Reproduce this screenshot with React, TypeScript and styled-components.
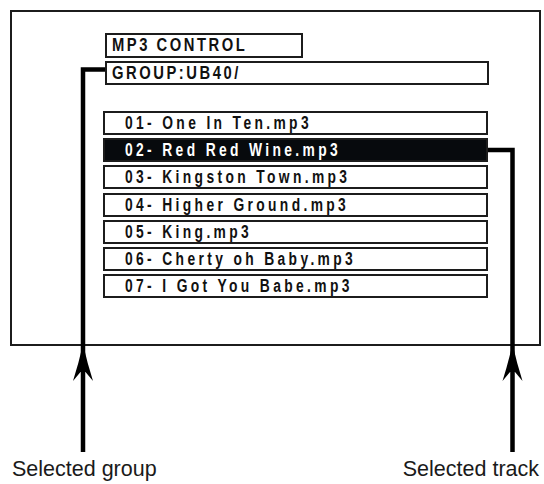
import styled, { createGlobalStyle } from 'styled-components'

const GlobalStyle = createGlobalStyle`
  html, body {
    margin: 0;
    padding: 0;
    background: #ffffff;
  }
`

const Page = styled.div`
  position: relative;
  width: 544px;
  height: 484px;
  padding-top: 10px;
  box-sizing: border-box;
  font-family: "Liberation Sans", Arial, sans-serif;
  color: #111;
`

const Screen = styled.div`
  margin-left: 10px;
  width: 531px;
  height: 336px;
  box-sizing: border-box;
  border: 2px solid #1c1c1c;
  padding: 21px 0 0 91px;
  display: flex;
  flex-direction: column;
`

// the OSD font is a condensed bold sans: squeeze Liberation Sans horizontally
const Condensed = styled.span<{ $scale: number }>`
  display: inline-block;
  transform: scaleX(${p => p.$scale});
  transform-origin: left center;
  white-space: pre;
`

const LabelBox = styled.div<{ $width: number }>`
  margin-left: 2px;
  width: ${p => p.$width}px;
  height: 25px;
  box-sizing: border-box;
  border: 2px solid #1c1c1c;
  padding-left: 4.5px;
  display: flex;
  align-items: center;
  font-weight: bold;
  font-size: 18px;
  letter-spacing: 3.1px;
  overflow: hidden;
  & + & {
    margin-top: 3px;
    height: 24px;
  }
`

const TrackList = styled.div`
  margin-top: 26px;
  display: flex;
  flex-direction: column;
  gap: 3.2px;
`

const Track = styled.div<{ $selected?: boolean }>`
  width: 385px;
  height: 24px;
  box-sizing: border-box;
  border: 2px solid #1c1c1c;
  padding: 1px 0 0 20px;
  display: flex;
  align-items: center;
  background: ${p => (p.$selected ? '#070a0d' : '#fff')};
  color: ${p => (p.$selected ? '#fff' : '#111')};
  font-weight: bold;
  font-size: 17.5px;
  letter-spacing: 4.25px;
  overflow: hidden;
`

const Captions = styled.div`
  margin-top: 111px;
  padding: 0 5px 0 12px;
  display: flex;
  justify-content: space-between;
  font-size: 21.5px;
  line-height: 24px;
  color: #1a1a1a;
`

const Overlay = styled.svg`
  position: absolute;
  left: 0;
  top: 0;
  pointer-events: none;
`

const tracks = [
  '01- One In Ten.mp3',
  '02- Red Red Wine.mp3',
  '03- Kingston Town.mp3',
  '04- Higher Ground.mp3',
  '05- King.mp3',
  '06- Cherty oh Baby.mp3',
  '07- I Got You Babe.mp3',
]

// arrow head pointing up, tip at (cx, 344)
function arrowHead(cx: number) {
  return `M${cx} 344 Q${cx + 4.5} 364 ${cx + 10} 381 L${cx + 2.5} 372 L${cx - 2.5} 372 L${cx - 10} 381 Q${cx - 4.5} 364 ${cx} 344 Z`
}

export default function App() {
  const selected = 1

  return (
    <>
      <GlobalStyle />
      <Page>
        <Screen>
          <LabelBox $width={198}><Condensed $scale={0.82}>MP3 CONTROL</Condensed></LabelBox>
          <LabelBox $width={384}><Condensed $scale={0.82}>GROUP:UB40/</Condensed></LabelBox>
          <TrackList>
            {tracks.map((t, i) => (
              <Track key={i} $selected={i === selected}>
                <Condensed $scale={0.79}>{t}</Condensed>
              </Track>
            ))}
          </TrackList>
        </Screen>
        <Captions>
          <span>Selected group</span>
          <span>Selected track</span>
        </Captions>

        <Overlay width={544} height={484} viewBox="0 0 544 484">
          {/* group pointer */}
          <path d="M105 69.5 H83 V452" fill="none" stroke="#000" strokeWidth={4.5} />
          <path d={arrowHead(83)} fill="#000" />
          {/* track pointer */}
          <path d="M488 150 H512.5 V452" fill="none" stroke="#000" strokeWidth={4.5} />
          <path d={arrowHead(512.5)} fill="#000" />
        </Overlay>
      </Page>
    </>
  )
}
